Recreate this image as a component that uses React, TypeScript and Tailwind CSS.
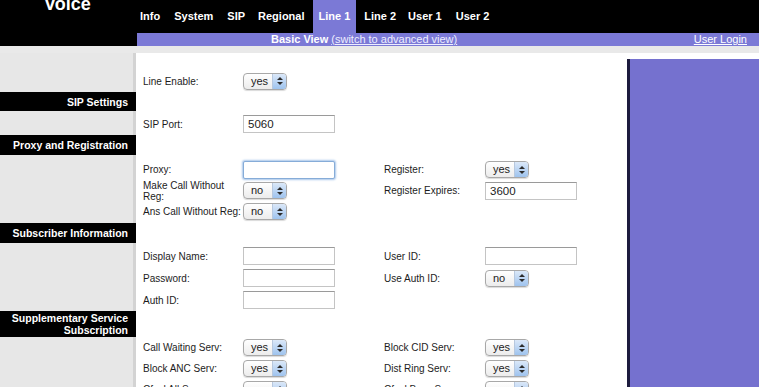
const Sel = ({ v }: { v: string }) => (
  <div className="flex h-[17px] w-[44px] items-center overflow-hidden rounded-[4px] border border-[#a8a8a8] bg-gradient-to-b from-white to-[#ececec] shadow-[0_1px_1px_rgba(0,0,0,0.15)]">
    <span className="flex-1 pl-[7px] text-[11px] leading-none text-[#222]">{v}</span>
    <span className="flex h-full w-[14px] flex-col items-center justify-center gap-[2px] border-l border-[#b7c8de] bg-gradient-to-b from-[#dbe8f8] to-[#9ec3ee]">
      <svg width="6" height="3" viewBox="0 0 6 3">
        <path d="M0 3 L3 0 L6 3Z" fill="#2b2b2b" />
      </svg>
      <svg width="6" height="3" viewBox="0 0 6 3">
        <path d="M0 0 L3 3 L6 0Z" fill="#2b2b2b" />
      </svg>
    </span>
  </div>
);

const Inp = ({ v = "", focus = false }: { v?: string; focus?: boolean }) => (
  <div
    className={
      focus
        ? "h-[18px] w-[92px] rounded-[2px] border border-[#86acd8] bg-white shadow-[0_0_2px_1px_#a9c6ea]"
        : "h-[18px] w-[92px] border border-[#c4c4c4] border-t-[#9a9a9a] bg-white pl-[4px] text-[11.5px] leading-[16px] text-[#222]"
    }
  >
    {v}
  </div>
);

const Lbl = ({ children }: { children: React.ReactNode }) => (
  <div className="whitespace-nowrap text-[10px] leading-[11px] text-[#1c1c1c]">{children}</div>
);

const Side = ({ title, h }: { title?: React.ReactNode; h: string }) =>
  title ? (
    <div className={`${h} flex w-[136px] shrink-0 items-center justify-end bg-black pr-[8px] text-right text-[10.5px] font-bold leading-[12px] text-white`}>
      {title}
    </div>
  ) : (
    <div className={`${h} w-[136px] shrink-0 bg-[#e7e7e7] shadow-[inset_-3px_0_0_#d3d3d3]`} />
  );

const Grid = ({ rowH, children }: { rowH: string; children: React.ReactNode }) => (
  <div className={`grid grid-cols-[100px_141px_101px_1fr] items-center pl-[7px] ${rowH}`}>{children}</div>
);

export default function App() {
  const tabs = [
    { t: "Info", m: "ml-[3px]" },
    { t: "System", m: "ml-[14px]" },
    { t: "SIP", m: "ml-[14px]" },
    { t: "Regional", m: "ml-[13px]" },
  ];
  return (
    <div className="h-[387px] w-[759px] overflow-hidden bg-white font-['Liberation_Sans',Arial,sans-serif]">
      {/* header */}
      <div className="flex h-[46px] bg-black">
        <div className="w-[137px] shrink-0 overflow-hidden">
          <div className="-mt-[6px] pl-[44px] text-[18px] font-bold leading-[20px] text-white">Voice</div>
        </div>
        <div className="flex flex-1 flex-col">
          <div className="flex h-[33px] items-center text-[11px] font-bold text-white">
            {tabs.map((x) => (
              <span key={x.t} className={x.m}>
                {x.t}
              </span>
            ))}
            <span className="ml-[8px] flex h-full items-center bg-[#7b79d6] px-[6px]">Line 1</span>
            <span className="ml-[8px]">Line 2</span>
            <span className="ml-[12px]">User 1</span>
            <span className="ml-[14px]">User 2</span>
          </div>
          <div className="flex h-[13px] items-center bg-[#7b79d6] pl-[134px] pr-[12px] text-[11px] leading-[13px] text-white">
            <span className="font-bold">Basic View</span>
            <span className="ml-[3px] text-[#eeeeff] underline">(switch to advanced view)</span>
            <span className="ml-auto underline">User Login</span>
          </div>
        </div>
      </div>
      <div className="h-[7px] bg-[#e9e9e9]" />

      {/* body */}
      <div className="flex">
        <div className="flex w-[627px] shrink-0 flex-col">
          <div className="flex">
            <Side h="h-[39px]" />
            <div className="flex-1 pt-[17px]">
              <Grid rowH="auto-rows-[22px]">
                <Lbl>Line Enable:</Lbl>
                <Sel v="yes" />
              </Grid>
            </div>
          </div>
          <div className="flex">
            <Side h="h-[19px]" title="SIP Settings" />
            <div className="flex-1" />
          </div>
          <div className="flex">
            <Side h="h-[24px]" />
            <div className="flex-1 pt-[3px]">
              <Grid rowH="auto-rows-[20px]">
                <Lbl>SIP Port:</Lbl>
                <Inp v="5060" />
              </Grid>
            </div>
          </div>
          <div className="flex">
            <Side h="h-[20px]" title="Proxy and Registration" />
            <div className="flex-1" />
          </div>
          <div className="flex">
            <Side h="h-[68px]" />
            <div className="flex-1 pt-[4px]">
              <Grid rowH="auto-rows-[21px]">
                <Lbl>Proxy:</Lbl>
                <Inp focus />
                <Lbl>Register:</Lbl>
                <Sel v="yes" />
                <Lbl>
                  Make Call Without
                  <br />
                  Reg:
                </Lbl>
                <Sel v="no" />
                <Lbl>Register Expires:</Lbl>
                <Inp v="3600" />
                <Lbl>Ans Call Without Reg:</Lbl>
                <Sel v="no" />
              </Grid>
            </div>
          </div>
          <div className="flex">
            <Side h="h-[20px]" title="Subscriber Information" />
            <div className="flex-1" />
          </div>
          <div className="flex">
            <Side h="h-[68px]" />
            <div className="flex-1 pt-[2px]">
              <Grid rowH="auto-rows-[22px]">
                <Lbl>Display Name:</Lbl>
                <Inp />
                <Lbl>User ID:</Lbl>
                <Inp />
                <Lbl>Password:</Lbl>
                <Inp />
                <Lbl>Use Auth ID:</Lbl>
                <Sel v="no" />
                <Lbl>Auth ID:</Lbl>
                <Inp />
              </Grid>
            </div>
          </div>
          <div className="flex">
            <Side
              h="h-[26px]"
              title={
                <span>
                  Supplementary Service
                  <br />
                  Subscription
                </span>
              }
            />
            <div className="flex-1" />
          </div>
          <div className="flex">
            <Side h="h-[70px]" />
            <div className="flex-1">
              <Grid rowH="auto-rows-[21px]">
                <Lbl>Call Waiting Serv:</Lbl>
                <Sel v="yes" />
                <Lbl>Block CID Serv:</Lbl>
                <Sel v="yes" />
                <Lbl>Block ANC Serv:</Lbl>
                <Sel v="yes" />
                <Lbl>Dist Ring Serv:</Lbl>
                <Sel v="yes" />
                <Lbl>Cfwd All Serv:</Lbl>
                <Sel v="yes" />
                <Lbl>Cfwd Busy Serv:</Lbl>
                <Sel v="yes" />
              </Grid>
            </div>
          </div>
        </div>
        <div className="mt-[6px] h-[340px] flex-1 border-l-[3px] border-[#1d1b3e] bg-[#7571cf]" />
      </div>
    </div>
  );
}
